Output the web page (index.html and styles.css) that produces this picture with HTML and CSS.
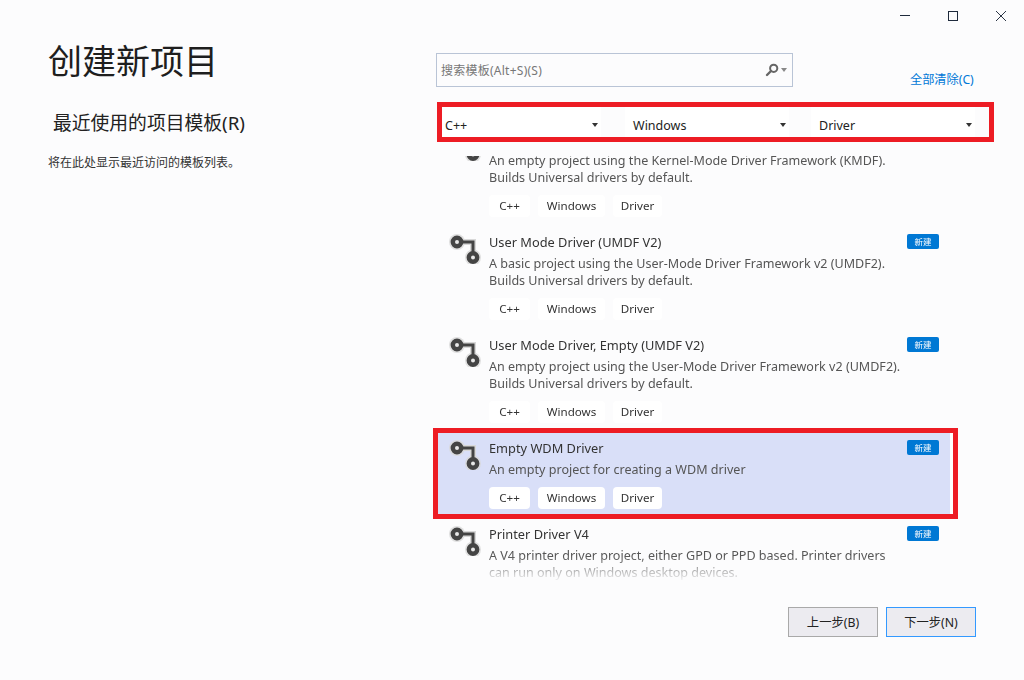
FILE: index.html
```html
<!DOCTYPE html>
<html lang="zh-CN">

<head>
    <meta charset="UTF-8">
    <title>创建新项目</title>
    <link rel="stylesheet" href="styles.css">
</head>

<body>
    <div class="window">
        <div class="titlebar">
            <svg class="win-btn" width="48" height="30" viewBox="0 0 48 30"><path d="M16 15.5h10" stroke="#1e2a3c" fill="none"/></svg>
            <svg class="win-btn" width="48" height="30" viewBox="0 0 48 30"><rect x="16.5" y="11.5" width="9" height="9" stroke="#1e2a3c" fill="none"/></svg>
            <svg class="win-btn" width="48" height="30" viewBox="0 0 48 30"><path d="M16 11l10 10M26 11l-10 10" stroke="#2c3646" fill="none"/></svg>
        </div>

        <div class="main">
            <div class="left">
                <h1 class="page-title">创建新项目</h1>
                <h2 class="recent-title">最近使用的项目模板(R)</h2>
                <p class="recent-empty">将在此处显示最近访问的模板列表。</p>
            </div>

            <div class="right">
                <div class="search-row">
                    <div class="search">
                        <span class="search-text">搜索模板(Alt+S)(S)</span>
                        <svg width="14" height="14" viewBox="0 0 14 14"><circle cx="8.7" cy="5.3" r="3.6" fill="none" stroke="#666" stroke-width="2"/><path d="M6 8l-4 4" stroke="#666" stroke-width="2.4" stroke-linecap="round"/></svg>
                        <span class="caret caret-grey"></span>
                    </div>
                    <a class="clear-all">全部清除(C)</a>
                </div>

                <div class="filters">
                    <div class="select select-first"><span>C++</span><span class="caret"></span></div>
                    <div class="select"><span>Windows</span><span class="caret"></span></div>
                    <div class="select select-last"><span>Driver</span><span class="caret"></span></div>
                </div>

                <div class="list">
                    <!-- scrolled up, its title is out of view -->
                    <div class="item item-scrolled">
                        <svg class="item-icon" width="32" height="32" viewBox="0 0 32 32"><use href="#driver-icon"/></svg>
                        <div class="item-body">
                            <div class="item-title"></div>
                            <div class="item-desc">An empty project using the Kernel-Mode Driver Framework (KMDF). Builds Universal drivers by default.</div>
                            <div class="tags"><span class="tag">C++</span><span class="tag">Windows</span><span class="tag">Driver</span></div>
                        </div>
                    </div>

                    <div class="item">
                        <svg class="item-icon" width="32" height="32" viewBox="0 0 32 32"><use href="#driver-icon"/></svg>
                        <div class="item-body">
                            <div class="item-title">User Mode Driver (UMDF V2)</div>
                            <div class="item-desc">A basic project using the User-Mode Driver Framework v2 (UMDF2). Builds Universal drivers by default.</div>
                            <div class="tags"><span class="tag">C++</span><span class="tag">Windows</span><span class="tag">Driver</span></div>
                        </div>
                        <span class="badge">新建</span>
                    </div>

                    <div class="item">
                        <svg class="item-icon" width="32" height="32" viewBox="0 0 32 32"><use href="#driver-icon"/></svg>
                        <div class="item-body">
                            <div class="item-title">User Mode Driver, Empty (UMDF V2)</div>
                            <div class="item-desc">An empty project using the User-Mode Driver Framework v2 (UMDF2). Builds Universal drivers by default.</div>
                            <div class="tags"><span class="tag">C++</span><span class="tag">Windows</span><span class="tag">Driver</span></div>
                        </div>
                        <span class="badge">新建</span>
                    </div>

                    <div class="item item-selected">
                        <svg class="item-icon" width="32" height="32" viewBox="0 0 32 32"><use href="#driver-icon"/></svg>
                        <div class="item-body">
                            <div class="item-title">Empty WDM Driver</div>
                            <div class="item-desc">An empty project for creating a WDM driver</div>
                            <div class="tags"><span class="tag">C++</span><span class="tag">Windows</span><span class="tag">Driver</span></div>
                        </div>
                        <span class="badge">新建</span>
                    </div>

                    <div class="item">
                        <svg class="item-icon" width="32" height="32" viewBox="0 0 32 32"><use href="#driver-icon"/></svg>
                        <div class="item-body">
                            <div class="item-title">Printer Driver V4</div>
                            <div class="item-desc">A V4 printer driver project, either GPD or PPD based. Printer drivers can run only on Windows desktop devices.</div>
                        </div>
                        <span class="badge">新建</span>
                    </div>
                </div>

                <div class="footer">
                    <button class="btn">上一步(B)</button>
                    <button class="btn btn-primary">下一步(N)</button>
                </div>
            </div>
        </div>
    </div>

    <svg width="0" height="0" class="defs">
        <defs>
            <g id="driver-icon">
                <path d="M8 10H24V25.5" fill="none" stroke="#d8d8d8" stroke-width="6"/>
                <circle cx="8" cy="10" r="8" fill="#d8d8d8" opacity="0.8"/>
                <circle cx="24" cy="25.5" r="8" fill="#d8d8d8" opacity="0.8"/>
                <path d="M8 10H24V25.5" fill="none" stroke="#444" stroke-width="3"/>
                <circle cx="8" cy="10" r="4.2" fill="#e8e8e8" stroke="#444" stroke-width="4.4"/>
                <circle cx="24" cy="25.5" r="4.2" fill="#e8e8e8" stroke="#444" stroke-width="4.4"/>
            </g>
        </defs>
    </svg>
</body>

</html>
```

FILE: styles.css
```css
* {
    margin: 0;
    padding: 0;
    box-sizing: border-box;
}

body {
    background: #fcfcfd;
    color: #1e1e1e;
    font-family: "Noto Sans", "Noto Sans CJK SC", sans-serif;
    overflow: hidden;
}

.defs {
    display: block;
    height: 0;
}

.window {
    width: 1024px;
    height: 680px;
    display: flex;
    flex-direction: column;
}

.titlebar {
    height: 30px;
    display: flex;
    justify-content: flex-end;
    margin-right: -4px;
}

.main {
    flex: 1;
    display: flex;
}

.left {
    width: 433px;
    padding: 7px 0 0 48px;
}

.page-title {
    font-size: 34px;
    font-weight: 400;
    line-height: 46px;
    font-family: "Noto Sans CJK SC", sans-serif;
}

.recent-title {
    font-size: 18.8px;
    font-weight: 400;
    line-height: 26px;
    margin: 27px 0 0 5px;
    color: #222;
}

.recent-empty {
    font-size: 12px;
    line-height: 18px;
    margin-top: 18px;
    color: #333;
}

.right {
    flex: 1;
    display: flex;
    flex-direction: column;
}

.search-row {
    display: flex;
    margin: 23px 0 0 3px;
    height: 34px;
}

.search {
    width: 357px;
    height: 34px;
    border: 1px solid #b9c4d6;
    display: flex;
    align-items: center;
    padding: 0 5px 0 4px;
}

.search-text {
    flex: 1;
    font-size: 12px;
    letter-spacing: 0.25px;
    color: #777;
}

.caret {
    width: 0;
    height: 0;
    border-left: 3.5px solid transparent;
    border-right: 3.5px solid transparent;
    border-top: 4px solid #333;
}

.caret-grey {
    border-top-color: #888;
    margin-left: 2px;
}

.clear-all {
    font-size: 12.2px;
    color: #0078d7;
    margin: 18px 0 0 117px;
    line-height: 18px;
}

.filters {
    width: 557px;
    height: 40px;
    margin: 15px 0 0 4px;
    border: 5px solid #ed1c24;
    display: flex;
    gap: 24px;
}

.select {
    width: 164px;
    background: #fff;
    display: flex;
    align-items: center;
    justify-content: space-between;
    padding: 6px 3px 0 8px;
    font-size: 12.5px;
    color: #222;
}

.select-first {
    width: 159px;
    padding-left: 3px;
}

.select-last {
    margin-left: -2px;
}

.list {
    width: 525px;
    height: 426px;
    margin-top: 14px;
    padding: 0 5px;
    overflow: hidden;
    -webkit-mask-image: linear-gradient(to bottom, #000 400px, transparent 426px);
    mask-image: linear-gradient(to bottom, #000 400px, transparent 426px);
}

.item {
    display: flex;
    padding: 5px 11px 5px 11px;
    margin-bottom: 5px;
    border-right: 3px solid transparent;
}

.item-scrolled {
    margin-top: -32px;
}

.item-selected {
    background: #d9dff8;
    border-right-color: #fff;
    outline: 5px solid #ed1c24;
}

.item-icon {
    flex: none;
    margin-right: 8px;
}

.item-body {
    flex: 1;
    min-width: 0;
}

.item-title {
    font-size: 12.8px;
    line-height: 21px;
    height: 20px;
    color: #333;
}

.item-desc {
    font-size: 12.55px;
    line-height: 17px;
    margin-top: 3px;
    color: #555;
    width: 415px;
}

.tags {
    display: flex;
    gap: 8px;
    margin-top: 9px;
}

.tag {
    width: 49px;
    height: 22px;
    line-height: 22px;
    font-size: 11.6px;
    text-align: center;
    background: #fff;
    border-radius: 4px;
    color: #333;
}

.tag:nth-child(1) {
    width: 41px;
}

.tag:nth-child(2) {
    width: 67px;
}

.badge {
    flex: none;
    width: 32px;
    height: 15px;
    margin-top: 2px;
    background: #0078d4;
    border-radius: 2px;
    color: #fff;
    font-size: 8.5px;
    line-height: 15px;
    text-align: center;
}

.footer {
    display: flex;
    gap: 8px;
    margin: 25px 0 0 355px;
}

.btn {
    width: 90px;
    height: 30px;
    background: #ecebf0;
    border: 1px solid #a9a9a9;
    font-family: "Noto Sans", "Noto Sans CJK SC", sans-serif;
    font-size: 12.3px;
    color: #222;
}

.btn-primary {
    border-color: #3399ff;
}
```
